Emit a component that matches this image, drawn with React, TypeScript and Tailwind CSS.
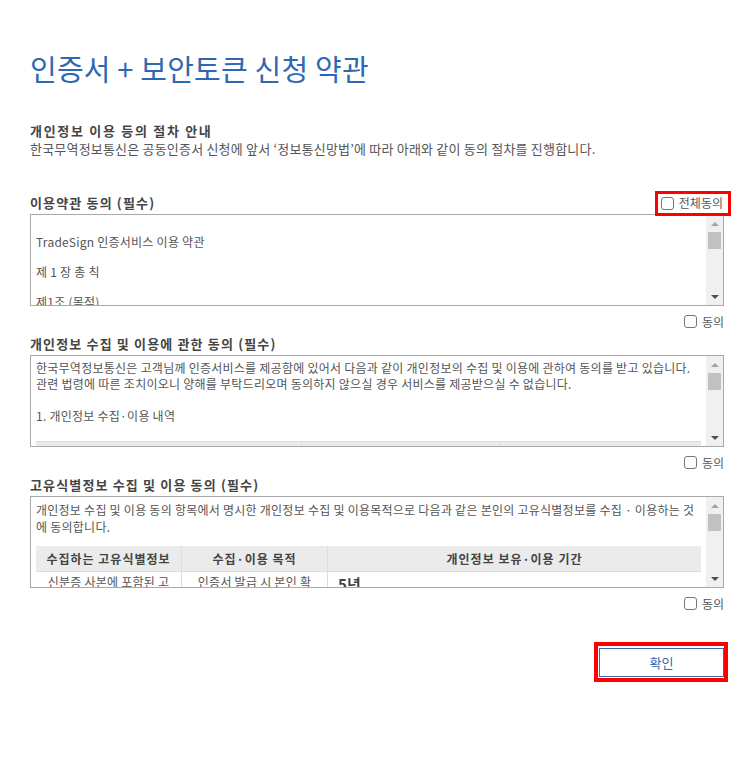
import React from "react";

const font = { fontFamily: '"Noto Sans CJK KR", "Noto Sans", sans-serif' };

function Checkbox({ label }: { label: string }) {
  return (
    <label className="flex items-center gap-[5px] text-[12px] text-[#555] leading-none">
      <span className="w-[13px] h-[13px] border border-[#767676] rounded-[3px] bg-white" />
      <span>{label}</span>
    </label>
  );
}

function Scrollbar() {
  return (
    <div className="w-[17px] shrink-0 bg-[#f0f0f0] flex flex-col items-center">
      <div className="h-[17px] flex items-center justify-center">
        <span className="w-0 h-0 border-l-[4px] border-r-[4px] border-b-[4px] border-l-transparent border-r-transparent border-b-[#a3a3a3]" />
      </div>
      <div className="w-[13px] h-[17px] bg-[#c1c1c1]" />
      <div className="flex-1" />
      <div className="h-[17px] flex items-center justify-center">
        <span className="w-0 h-0 border-l-[4px] border-r-[4px] border-t-[4px] border-l-transparent border-r-transparent border-t-[#505050]" />
      </div>
    </div>
  );
}

function TermsBox({ children }: { children: React.ReactNode }) {
  return (
    <div className="h-[92px] border border-[#a9a9a9] flex">
      <div className="flex-1 overflow-hidden px-[5px] pt-[4px] text-[12px] text-[#555] tracking-[0.25px]">{children}</div>
      <Scrollbar />
    </div>
  );
}

export default function App() {
  return (
    <div className="w-[754px] h-[779px] bg-white px-[30px] pt-[48px]" style={font}>
      <h1 className="text-[29px] leading-[40px] text-[#2f68b2] tracking-[0.2px]">인증서 + 보안토큰 신청 약관</h1>

      <div className="mt-[34px]">
        <h2 className="text-[13px] font-bold text-[#444] leading-[18px] tracking-[1.7px]">개인정보 이용 등의 절차 안내</h2>
        <p className="text-[13px] text-[#555] leading-[18px] tracking-[0.2px]">
          한국무역정보통신은 공동인증서 신청에 앞서 ‘정보통신망법’에 따라 아래와 같이 동의 절차를 진행합니다.
        </p>
      </div>

      {/* 이용약관 */}
      <div className="mt-[34px]">
        <div className="flex items-center justify-between h-[22px]">
          <h3 className="text-[13px] font-bold text-[#444] tracking-[1.15px]">이용약관 동의 (필수)</h3>
          <div className="relative mr-[1px]">
            <Checkbox label="전체동의" />
            <div className="absolute -left-[6px] -right-[8px] -top-[6px] -bottom-[6px] border-[3px] border-[#ff0000]" />
          </div>
        </div>
        <TermsBox>
          <div className="leading-[15px]">
            <div className="h-[15px]" />
            <div>TradeSign 인증서비스 이용 약관</div>
            <div className="h-[15px]" />
            <div>제 1 장 총 칙</div>
            <div className="h-[15px]" />
            <div>제1조 (목적)</div>
          </div>
        </TermsBox>
        <div className="flex justify-end mt-[9px]">
          <Checkbox label="동의" />
        </div>
      </div>

      {/* 개인정보 수집 */}
      <div className="mt-[5px]">
        <h3 className="text-[13px] font-bold text-[#444] h-[22px] leading-[22px] tracking-[1.15px]">개인정보 수집 및 이용에 관한 동의 (필수)</h3>
        <TermsBox>
          <div className="leading-[16px]">
            <div>한국무역정보통신은 고객님께 인증서비스를 제공함에 있어서 다음과 같이 개인정보의 수집 및 이용에 관하여 동의를 받고 있습니다.</div>
            <div>관련 법령에 따른 조치이오니 양해를 부탁드리오며 동의하지 않으실 경우 서비스를 제공받으실 수 없습니다.</div>
            <div className="h-[16px]" />
            <div>1. 개인정보 수집·이용 내역</div>
            <div className="mt-[17px] grid grid-cols-[266px_199px_1fr] border-t border-[#ddd] bg-[#ebebeb] h-[20px]">
              <div className="border-r border-[#ddd]" />
              <div className="border-r border-[#ddd]" />
              <div />
            </div>
          </div>
        </TermsBox>
        <div className="flex justify-end mt-[9px]">
          <Checkbox label="동의" />
        </div>
      </div>

      {/* 고유식별정보 */}
      <div className="mt-[5px]">
        <h3 className="text-[13px] font-bold text-[#444] h-[22px] leading-[22px] tracking-[1.15px]">고유식별정보 수집 및 이용 동의 (필수)</h3>
        <TermsBox>
          <div className="leading-[17px]">
            <div>
              개인정보 수집 및 이용 동의 항목에서 명시한 개인정보 수집 및 이용목적으로 다음과 같은 본인의 고유식별정보를 수집 · 이용하는 것 에 동의합니다.
            </div>
            <div className="mt-[11px] grid grid-cols-[146px_146px_1fr]">
              <div className="bg-[#ebebeb] border-r border-b border-[#ddd] h-[26px] flex items-center justify-center font-bold text-[#444] tracking-[1px]">수집하는 고유식별정보</div>
              <div className="bg-[#ebebeb] border-r border-b border-[#ddd] h-[26px] flex items-center justify-center font-bold text-[#444] tracking-[1px]">수집·이용 목적</div>
              <div className="bg-[#ebebeb] border-b border-[#ddd] h-[26px] flex items-center justify-center font-bold text-[#444] tracking-[1px]">개인정보 보유·이용 기간</div>
              <div className="border-r border-[#ddd] text-center pt-[1px] whitespace-nowrap">신분증 사본에 포함된 고</div>
              <div className="border-r border-[#ddd] text-center pt-[1px] whitespace-nowrap">인증서 발급 시 본인 확</div>
              <div className="pl-[10px] pt-[3px] text-[15px] font-bold text-[#444]">5년</div>
            </div>
          </div>
        </TermsBox>
        <div className="flex justify-end mt-[9px]">
          <Checkbox label="동의" />
        </div>
      </div>

      <div className="flex justify-end mt-[38px]">
        <div className="relative">
          <button className="w-[125px] h-[29px] border border-[#3a6ab0] bg-white text-[13px] text-[#2f68b2]" style={font}>
            확인
          </button>
          <div className="absolute -left-[5px] -right-[4px] -top-[6px] -bottom-[5px] border-[4px] border-[#ff0000]" />
        </div>
      </div>
    </div>
  );
}
